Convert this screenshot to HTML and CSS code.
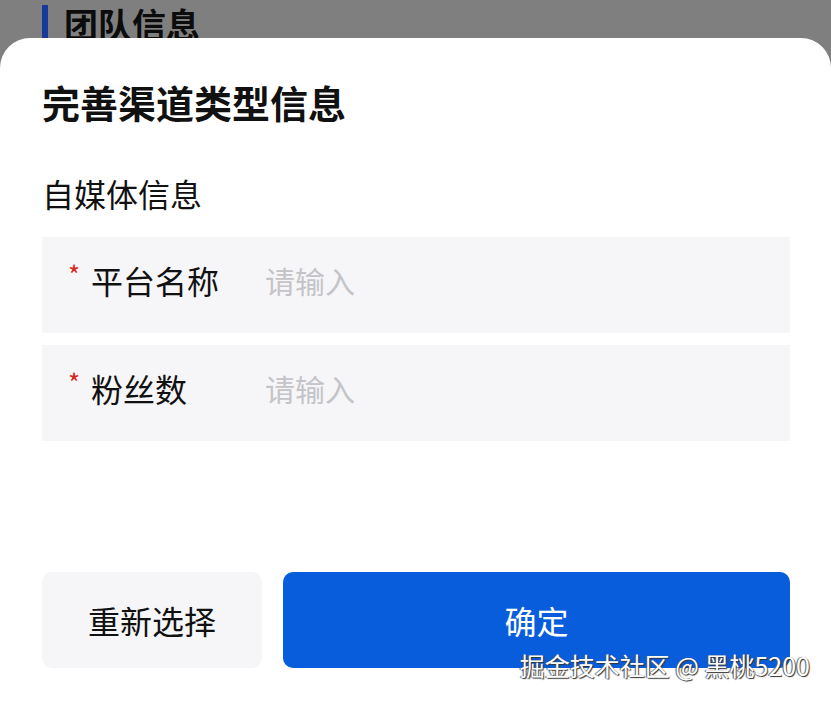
FILE: index.html
```html
<!DOCTYPE html>
<html lang="zh-CN">
  <head>
    <meta charset="UTF-8" />
    <meta name="viewport" content="width=device-width, initial-scale=1.0" />
    <title>完善渠道类型信息</title>
    <link rel="stylesheet" href="styles.css">
  </head>
  <body>
    <div class="page">
      <!-- page behind the mask -->
      <div class="behind">
        <div class="behind-title">团队信息</div>
      </div>

      <div class="sheet">
        <h1 class="sheet-title">完善渠道类型信息</h1>
        <div class="group-title">自媒体信息</div>

        <div class="field">
          <span class="required">*</span>
          <span class="field-label">平台名称</span>
          <span class="field-input">请输入</span>
        </div>
        <div class="field">
          <span class="required">*</span>
          <span class="field-label">粉丝数</span>
          <span class="field-input">请输入</span>
        </div>

        <div class="actions">
          <button class="btn btn-reset">重新选择</button>
          <button class="btn btn-primary">确定</button>
        </div>
      </div>

      <div class="watermark">掘金技术社区 @ 黑桃5200</div>
    </div>
  </body>
</html>
```

FILE: styles.css
```css
:root {
  --mask-color: #7f7f7f;
  --field-bg: #f6f6f8;
  --primary: #075ddc;
  --text: #111;
  --placeholder: #c4c4c8;
}

* {
  box-sizing: border-box;
}

body {
  margin: 0;
  background-color: var(--mask-color);
  font-family: "Noto Sans CJK SC", "Noto Sans", sans-serif;
  color: var(--text);
}

.page {
  position: relative;
  width: 831px;
  height: 703px;
  overflow: hidden;
}

.behind {
  height: 38px;
  padding-left: 42px;
  padding-top: 5px;
  overflow: hidden;
}

.behind-title {
  border-left: 6px solid #16399c;
  padding-left: 16px;
  font-size: 34px;
  font-weight: 700;
  line-height: 38px;
  height: 40px;
  color: #0c0c0c;
}

.sheet {
  height: 665px;
  background: #fff;
  border-radius: 30px 30px 0 0;
  padding: 40px 41px 0 42px;
}

.sheet-title {
  margin: 0;
  font-size: 38px;
  font-weight: 700;
  line-height: 48px;
}

.group-title {
  margin-top: 47px;
  font-size: 32px;
  line-height: 40px;
}

.field {
  display: flex;
  align-items: center;
  height: 96px;
  margin-top: 24px;
  padding-left: 26px;
  padding-bottom: 11px;
  background: var(--field-bg);
}

.field + .field {
  margin-top: 12px;
}

.required {
  color: #d9261c;
  font-size: 26px;
  width: 23px;
  margin-top: -12px;
}

.field-label {
  width: 174px;
  font-size: 32px;
}

.field-input {
  font-size: 30px;
  color: var(--placeholder);
}

.actions {
  display: flex;
  gap: 21px;
  margin-top: 131px;
}

.btn {
  height: 96px;
  border: none;
  border-radius: 10px;
  font-family: inherit;
  font-size: 32px;
}

.btn-reset {
  width: 220px;
  background: var(--field-bg);
  color: var(--text);
}

.btn-primary {
  flex: 1;
  background: var(--primary);
  color: #fff;
}

.watermark {
  position: absolute;
  right: 21px;
  top: 647px;
  font-size: 25px;
  line-height: 36px;
  color: #fff;
  text-shadow: 1px 1px 1px #333, -1px 0 1px #555;
}
```
